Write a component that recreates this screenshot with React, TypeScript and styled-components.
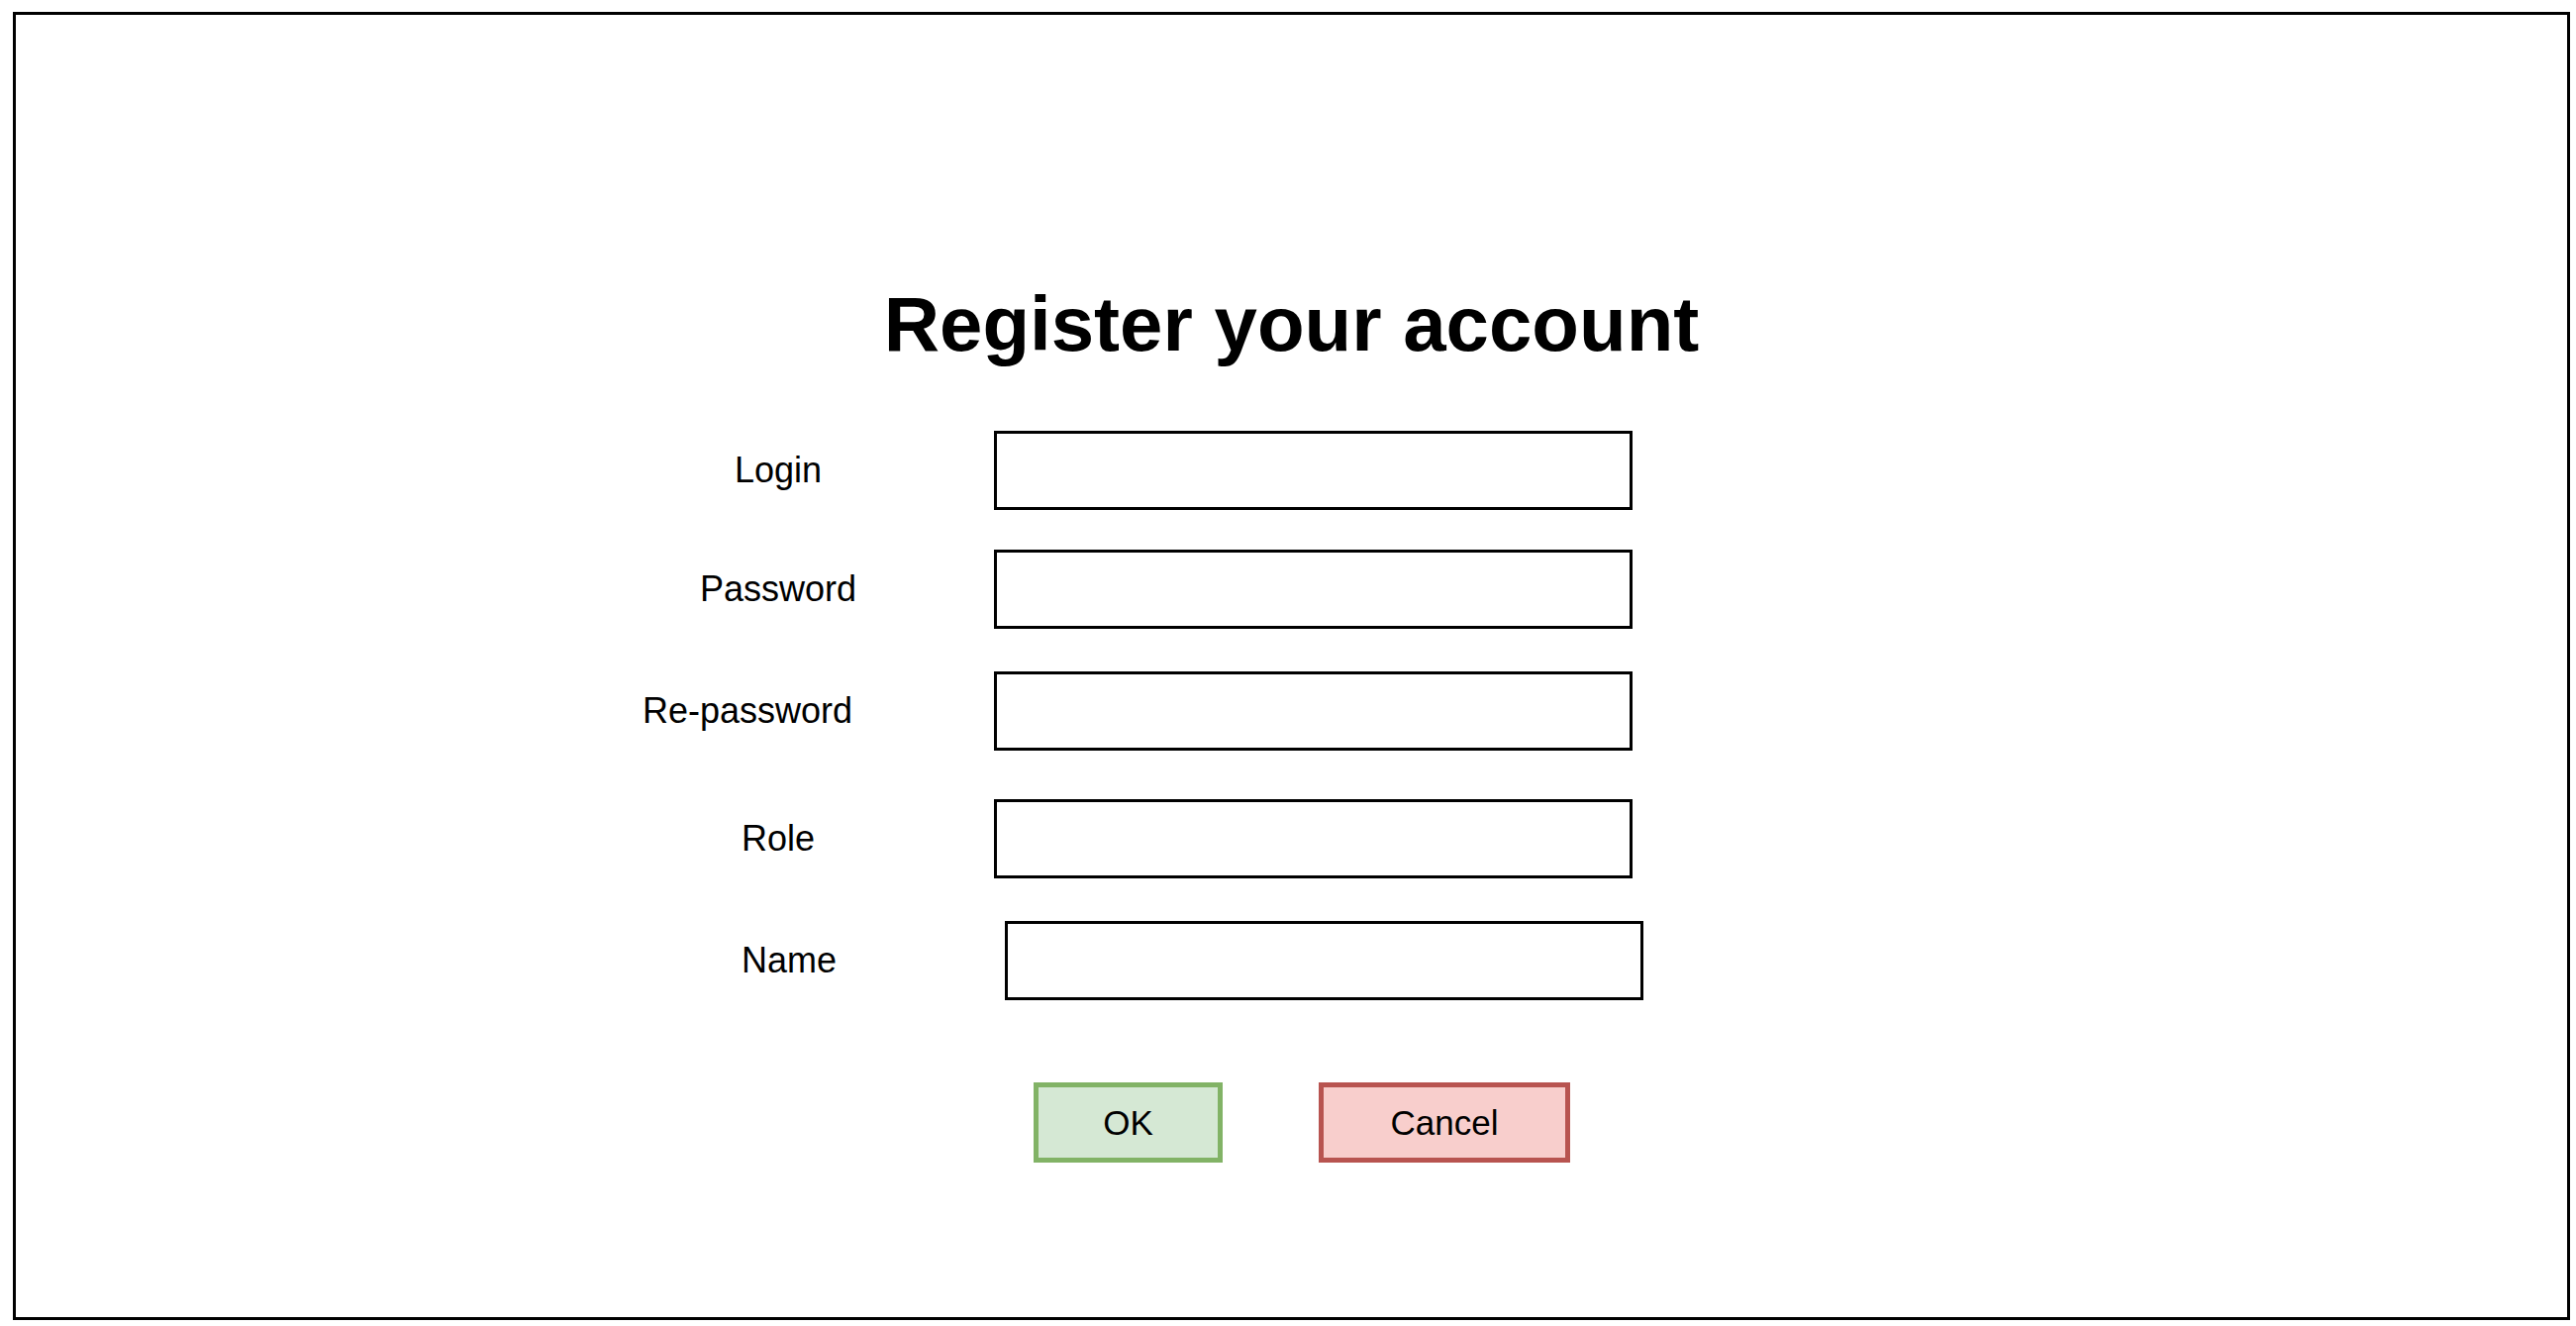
import styled, { createGlobalStyle } from 'styled-components';

const GlobalStyle = createGlobalStyle`
  html, body {
    margin: 0;
    padding: 0;
    background: #ffffff;
  }
  body {
    font-family: 'Liberation Sans', Arial, sans-serif;
    color: #000000;
  }
`;

const Frame = styled.div`
  box-sizing: border-box;
  width: 2583px;
  height: 1321px;
  margin: 12px 0 0 13px;
  border: 3px solid #000000;
  display: flex;
  flex-direction: column;
`;

const Title = styled.h1`
  margin: 273px 0 0;
  font-size: 78px;
  line-height: 78px;
  font-weight: 700;
  text-align: center;
  color: #000000;
`;

const Form = styled.div`
  display: flex;
  flex-direction: column;
  margin-left: 684px;
`;

const Row = styled.div<{ $top: number; $shift?: number }>`
  display: flex;
  align-items: center;
  margin-top: ${(p) => p.$top}px;
  margin-left: ${(p) => p.$shift ?? 0}px;
`;

const Label = styled.div<{ $pad?: number }>`
  box-sizing: border-box;
  width: 172px;
  margin-right: 132px;
  padding-right: ${(p) => p.$pad ?? 0}px;
  display: flex;
  justify-content: center;
  white-space: nowrap;
  font-size: 36px;
  line-height: 40px;
`;

const Field = styled.div`
  box-sizing: border-box;
  width: 645px;
  height: 80px;
  border: 3px solid #000000;
  background: #ffffff;
`;

const Actions = styled.div`
  display: flex;
  gap: 97px;
  margin: 83px 0 0 344px;
`;

const Button = styled.button<{ $fill: string; $stroke: string; $w: number }>`
  box-sizing: border-box;
  width: ${(p) => p.$w}px;
  height: 81px;
  padding: 0;
  border: 5px solid ${(p) => p.$stroke};
  background: ${(p) => p.$fill};
  font-family: 'Liberation Sans', Arial, sans-serif;
  font-size: 35px;
  color: #000000;
  cursor: pointer;
`;

const fields = [
  { label: 'Login', top: 69 },
  { label: 'Password', top: 40 },
  { label: 'Re-password', top: 43, pad: 62 },
  { label: 'Role', top: 49 },
  { label: 'Name', top: 43, shift: 11 },
];

export default function App() {
  return (
    <>
      <GlobalStyle />
      <Frame>
        <Title>Register your account</Title>
        <Form>
          {fields.map((f) => (
            <Row key={f.label} $top={f.top} $shift={f.shift}>
              <Label $pad={f.pad}>{f.label}</Label>
              <Field />
            </Row>
          ))}
          <Actions>
            <Button $w={191} $fill="#d5e8d4" $stroke="#82b366">OK</Button>
            <Button $w={254} $fill="#f8cecc" $stroke="#b85450">Cancel</Button>
          </Actions>
        </Form>
      </Frame>
    </>
  );
}
